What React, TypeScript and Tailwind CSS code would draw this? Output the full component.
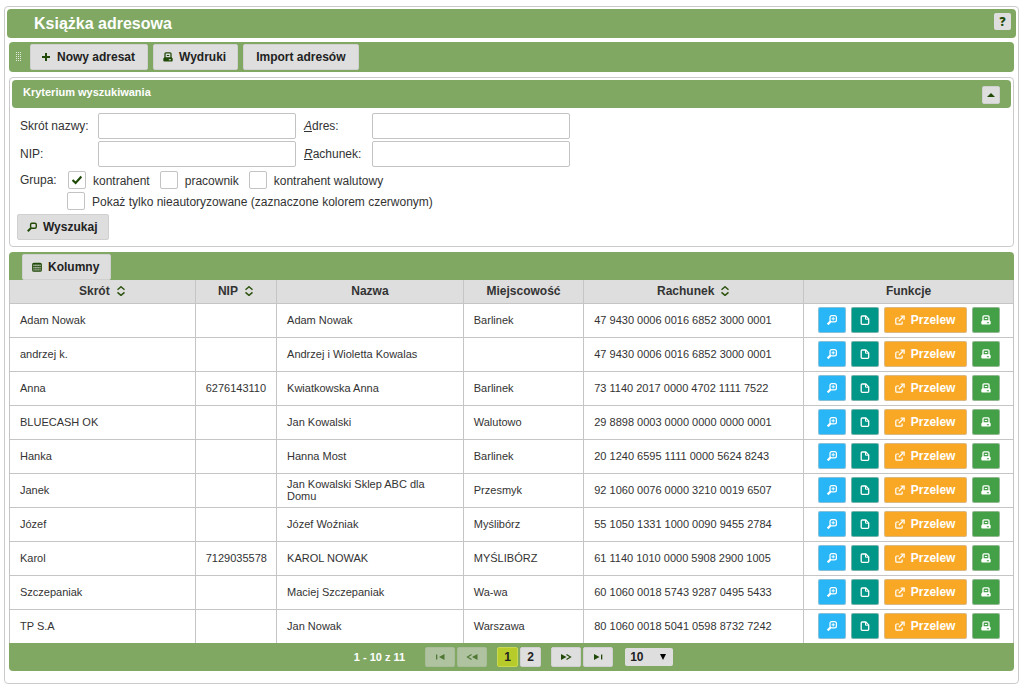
import type { ReactNode } from "react"
import { clsx } from "clsx"

type Row = {
  skrot: string
  nip?: string
  nazwa: string
  miasto?: string
  rachunek: string
}

const rows: Row[] = [
  { skrot: "Adam Nowak", nazwa: "Adam Nowak", miasto: "Barlinek", rachunek: "47 9430 0006 0016 6852 3000 0001" },
  { skrot: "andrzej k.", nazwa: "Andrzej i Wioletta Kowalas", rachunek: "47 9430 0006 0016 6852 3000 0001" },
  { skrot: "Anna", nip: "6276143110", nazwa: "Kwiatkowska Anna", miasto: "Barlinek", rachunek: "73 1140 2017 0000 4702 1111 7522" },
  { skrot: "BLUECASH OK", nazwa: "Jan Kowalski", miasto: "Walutowo", rachunek: "29 8898 0003 0000 0000 0000 0001" },
  { skrot: "Hanka", nazwa: "Hanna Most", miasto: "Barlinek", rachunek: "20 1240 6595 1111 0000 5624 8243" },
  { skrot: "Janek", nazwa: "Jan Kowalski Sklep ABC dla Domu", miasto: "Przesmyk", rachunek: "92 1060 0076 0000 3210 0019 6507" },
  { skrot: "Józef", nazwa: "Józef Woźniak", miasto: "Myślibórz", rachunek: "55 1050 1331 1000 0090 9455 2784" },
  { skrot: "Karol", nip: "7129035578", nazwa: "KAROL NOWAK", miasto: "MYŚLIBÓRZ", rachunek: "61 1140 1010 0000 5908 2900 1005" },
  { skrot: "Szczepaniak", nazwa: "Maciej Szczepaniak", miasto: "Wa-wa", rachunek: "60 1060 0018 5743 9287 0495 5433" },
  { skrot: "TP S.A", nazwa: "Jan Nowak", miasto: "Warszawa", rachunek: "80 1060 0018 5041 0598 8732 7242" },
]

const columns = [
  { label: "Skrót", width: "w-[18.5%]", sortable: true },
  { label: "NIP", width: "w-[8.1%]", sortable: true },
  { label: "Nazwa", width: "w-[18.6%]" },
  { label: "Miejscowość", width: "w-[12%]" },
  { label: "Rachunek", width: "w-[21.9%]", sortable: true },
  { label: "Funkcje", width: "w-[20.9%]" },
]

function Icon({ children, className }: { children: ReactNode; className?: string }) {
  return (
    <svg viewBox="0 0 10 10" className={clsx("size-[10px] shrink-0", className)} fill="none" stroke="currentColor" aria-hidden="true">
      {children}
    </svg>
  )
}

const PlusIcon = () => (
  <Icon>
    <path d="M5 1v8M1 5h8" strokeWidth="2" />
  </Icon>
)

const PrintIcon = () => (
  <Icon>
    <path d="M2 6V1.800q0-1 1-1h4q1 0 1 1V6" strokeWidth="1.3" />
    <path d="M3.800 3.500h2.400" />
    <path
      d="M1.500 5.200h7l1.200 1.300v2q0 1-1 1H1.300q-1 0-1-1v-2zM5.800 7.200v1.100h2.200V7.200z"
      fill="currentColor"
      fillRule="evenodd"
      stroke="none"
    />
  </Icon>
)

const SearchIcon = () => (
  <Icon>
    <path d="M4.800 1.200h3q1.500 0 1.500 1.500v2q0 1.500-1.500 1.500h-3q-1.200 0-1.200-1.500v-2q0-1.500 1.200-1.500z" strokeWidth="1.4" />
    <path d="M4 6 .8 9.200" strokeWidth="2" />
  </Icon>
)

const ZoomInIcon = () => (
  <Icon>
    <rect x="3" y=".7" width="6.400" height="6.200" rx="1.900" strokeWidth="1.2" />
    <path d="M6.200 2.200v3.200M4.600 3.800h3.200" />
    <path d="M3.400 6.600.6 9.400" strokeWidth="2.2" />
  </Icon>
)

const DocumentIcon = () => (
  <Icon>
    <path d="M2.200 1h3.600l2.900 2.900v4.400q0 1-1 1H2.200q-1 0-1-1V2q0-1 1-1z" strokeWidth="1.3" />
    <path d="M5.500 1v3.200h3.200" />
  </Icon>
)

const ExternalIcon = () => (
  <Icon>
    <path d="M4 3H1.700q-.9 0-.9.9v4.300q0 .9.9.9h4.600q.9 0 .9-.9V6.500" strokeWidth="1.2" />
    <path d="M3.800 6.200 8 2" strokeWidth="1.3" />
    <path d="M5.600 1.200h3.500v3.500" strokeWidth="1.3" />
  </Icon>
)

const GridIcon = () => (
  <Icon>
    <rect x=".8" y="1.3" width="8.4" height="7.9" rx="1" strokeWidth="1.3" />
    <path d="M.8 2.200h8.400M.8 4.500h8.400M.8 6.800h8.400M2.900 1.500v7.500M5 1.500v7.500M7.100 1.500v7.500" strokeWidth=".8" />
  </Icon>
)

const SortIcon = () => (
  <Icon className="text-[#2e5310]">
    <path d="M1.500 3.800 5 .8l3.500 3M1.500 6.400l3.500 3 3.500-3" strokeWidth="1.5" />
  </Icon>
)

function Button({ icon, className, children }: { icon?: ReactNode; className?: string; children: ReactNode }) {
  return (
    <button
      type="button"
      className={clsx("flex h-[26px] items-center rounded-xs border border-[#d0d0d0] bg-[#dedede] text-[12px] font-bold text-[#222]", className)}
    >
      {icon && <span className="mr-[6px] text-[#214a08]">{icon}</span>}
      {children}
    </button>
  )
}

function ActionButton({ label, color, icon, children }: { label: string; color: string; icon: ReactNode; children?: ReactNode }) {
  return (
    <button
      type="button"
      aria-label={label}
      className={clsx("flex h-[26px] items-center justify-center rounded-xs border border-[#c5c5c5]/60 text-[12px] font-bold text-white", color)}
    >
      {icon}
      {children}
    </button>
  )
}

function Checkbox({ id, label, checked }: { id: string; label: string; checked?: boolean }) {
  return (
    <div className="flex items-center gap-[7px]">
      <span className="grid size-[18px] place-items-center">
        <input
          id={id}
          type="checkbox"
          defaultChecked={checked}
          className="peer col-start-1 row-start-1 size-[18px] appearance-none rounded-xs border border-[#c3c3c3] bg-white"
        />
        <svg viewBox="0 0 10 10" className="pointer-events-none col-start-1 row-start-1 hidden size-[10px] peer-checked:block" fill="none" stroke="#1f4a08" aria-hidden="true">
          <path d="M.6 5 3.6 8 9.4 1.6" strokeWidth="2.2" />
        </svg>
      </span>
      <label htmlFor={id} className="pt-[2px]">{label}</label>
    </div>
  )
}

const fieldClass = "h-[26px] min-w-0 rounded-xs border border-[#c3c3c3] bg-white px-1"

function SearchPanel() {
  return (
    <section className="mt-[5px] rounded-sm border border-[#cbcbcb] p-[2px]">
      <header className="flex h-7 items-center justify-between rounded-sm bg-[#80a863] px-[11px] text-white">
        <h2 className="pb-[5px] text-[11px] font-bold">Kryterium wyszukiwania</h2>
        <button type="button" aria-label="Zwiń" className="mt-[2px] flex size-[18px] items-center justify-center rounded-xs border border-[#d0d0d0] bg-[#dedede] text-[#214a08]">
          <svg viewBox="0 0 8 4" className="h-1 w-2" fill="currentColor" aria-hidden="true">
            <path d="M4 0 8 4H0z" />
          </svg>
        </button>
      </header>

      <form className="px-[5px] pt-[5px] pb-1">
        <div className="grid grid-cols-[78px_198px_76px_198px] items-center gap-y-[2px] pl-[3px]">
          <label htmlFor="skrot">Skrót nazwy:</label>
          <input id="skrot" type="text" className={fieldClass} />
          <label htmlFor="adres" className="pl-2"><em className="underline">A</em>dres:</label>
          <input id="adres" type="text" className={fieldClass} />
          <label htmlFor="nip">NIP:</label>
          <input id="nip" type="text" className={fieldClass} />
          <label htmlFor="rachunek" className="pl-2"><em className="underline">R</em>achunek:</label>
          <input id="rachunek" type="text" className={fieldClass} />
        </div>

        <fieldset className="mt-1 flex items-center gap-[10px] pl-[3px]">
          <span className="w-[38px]">Grupa:</span>
          <Checkbox id="kontrahent" label="kontrahent" checked />
          <Checkbox id="pracownik" label="pracownik" />
          <Checkbox id="walutowy" label="kontrahent walutowy" />
        </fieldset>
        <div className="mt-[3px] pl-[50px]">
          <Checkbox id="nieautoryzowane" label="Pokaż tylko nieautoryzowane (zaznaczone kolorem czerwonym)" />
        </div>
        <Button icon={<SearchIcon />} className="mt-1 px-[9px]">
          <span className="pr-[2px]">Wyszukaj</span>
        </Button>
      </form>
    </section>
  )
}

function AddressTable() {
  return (
    <table className="w-full table-fixed border-collapse border-x border-[#c5c5c5] text-[11px]">
      <thead>
        <tr className="h-[23px] bg-[#dedede] text-[12px]">
          {columns.map((col) => (
            <th key={col.label} className={clsx("border border-t-0 border-[#c5c5c5] p-0 font-bold leading-4", col.width)}>
              <span className="inline-flex items-center gap-[6px] align-top">
                {col.label}
                {col.sortable && <SortIcon />}
              </span>
            </th>
          ))}
        </tr>
      </thead>
      <tbody className="[&_td]:border-x [&_td]:border-b [&_td]:border-[#c5c5c5] [&_td]:px-[10px] [&_td]:py-0 [&>tr:last-child>td]:border-b-0">
        {rows.map((row) => (
          <tr key={row.skrot} className="h-[34px] leading-3">
            <td>{row.skrot}</td>
            <td className="whitespace-nowrap">{row.nip}</td>
            <td>{row.nazwa}</td>
            <td>{row.miasto}</td>
            <td className="whitespace-nowrap">{row.rachunek}</td>
            <td>
              <div className="flex justify-center gap-[5px]">
                <ActionButton label="Podgląd" color="w-7 bg-[#29b6f6]" icon={<ZoomInIcon />} />
                <ActionButton label="Szczegóły" color="w-7 bg-[#009688]" icon={<DocumentIcon />} />
                <ActionButton label="Przelew" color="w-[83px] gap-[6px] bg-[#f9a825]" icon={<ExternalIcon />}>
                  Przelew
                </ActionButton>
                <ActionButton label="Drukuj" color="w-7 bg-[#43a047]" icon={<PrintIcon />} />
              </div>
            </td>
          </tr>
        ))}
      </tbody>
    </table>
  )
}

function PagerButton({ label, disabled, children }: { label: string; disabled?: boolean; children: ReactNode }) {
  return (
    <button
      type="button"
      aria-label={label}
      disabled={disabled}
      className="flex h-5 w-[30px] items-center justify-center rounded-xs border border-[#d0d0d0] bg-[#dedede] text-[#214a08] disabled:opacity-50"
    >
      <svg viewBox="0 0 12 8" className="h-2 w-3" fill="currentColor" stroke="none" aria-hidden="true">
        {children}
      </svg>
    </button>
  )
}

function Pager() {
  return (
    <div className="flex h-7 items-center justify-center gap-[10px] rounded-b-sm bg-[#80a863] pl-1 text-[12px] font-bold text-[#222]">
      <span className="mr-[10px] text-[11px] text-white">1 - 10 z 11</span>
      <div className="flex gap-[2px]">
        <PagerButton label="Pierwsza" disabled>
          <path d="M2 1.500h1.300v5H2zM10.500 1v6L5 4z" />
        </PagerButton>
        <PagerButton label="Poprzednia" disabled>
          <path d="M11.500 1v6L6 4z" />
          <path d="M5.500 1.500 1.500 4l4 2.500" fill="none" stroke="currentColor" strokeWidth="1.200" />
        </PagerButton>
      </div>
      <div className="flex gap-[2px]">
        <button type="button" className="h-5 w-[21px] rounded-xs border border-[#c8d84f] bg-[#b7cc2a]">1</button>
        <button type="button" className="h-5 w-[21px] rounded-xs border border-[#d0d0d0] bg-[#dedede]">2</button>
      </div>
      <div className="flex gap-[2px]">
        <PagerButton label="Następna">
          <path d="M1 1v6l5.500-3z" />
          <path d="M6.500 1.500l4 2.500-4 2.500" fill="none" stroke="currentColor" strokeWidth="1.200" />
        </PagerButton>
        <PagerButton label="Ostatnia">
          <path d="M2 1v6l5.500-3zM9 1.500h1.300v5H9z" />
        </PagerButton>
      </div>
      <div className="ml-[2px] grid items-center">
        <select aria-label="Liczba wierszy" className="col-start-1 row-start-1 h-[18px] w-12 appearance-none rounded-xs bg-[#dedede] pl-[5px]">
          <option>10</option>
        </select>
        <svg viewBox="0 0 6 6" className="pointer-events-none col-start-1 row-start-1 mr-[7px] size-[6px] justify-self-end" aria-hidden="true">
          <path d="M0 0h6L3 6z" />
        </svg>
      </div>
    </div>
  )
}

export default function App() {
  return (
    <div className="bg-white px-1 py-[6px] font-['Liberation_Sans',Arial,sans-serif] text-[12px] leading-4 text-[#333]">
      <main className="mr-[1px] rounded-sm border border-[#cbcbcb] p-[2px] pb-3">
        <header className="flex h-[29px] items-center justify-between rounded-sm bg-[#80a863] pr-[5px] pl-[27px]">
          <h1 className="text-[16px] font-bold text-white">Książka adresowa</h1>
          <button type="button" className="mb-1 size-[17px] rounded-xs bg-[#dedede] font-['Open_Sans',sans-serif] text-[12px] font-extrabold text-[#214a08]">
            ?
          </button>
        </header>

        <div className="px-[2px]">
          <div className="mt-1 flex h-[30px] items-center gap-[5px] rounded-sm bg-[#80a863] pl-[7px]">
            <svg viewBox="0 0 5 10" className="mr-1 h-[10px] w-[5px]" stroke="#e4eddd" strokeDasharray="1 1" aria-hidden="true">
              <path d="M.5 0v10M2.500 0v10M4.500 0v10" />
            </svg>
            <Button icon={<PlusIcon />} className="px-[10px]">
              <span className="pr-[2px]">Nowy adresat</span>
            </Button>
            <Button icon={<PrintIcon />} className="px-[9px]">
              <span className="pr-[2px]">Wydruki</span>
            </Button>
            <Button className="px-3">Import adresów</Button>
          </div>

          <SearchPanel />

          <section className="mt-[5px]">
            <div className="flex h-7 items-end rounded-t-sm bg-[#80a863] pl-[13px]">
              <Button icon={<GridIcon />} className="px-[9px]">
                <span className="pr-[2px]">Kolumny</span>
              </Button>
            </div>
            <AddressTable />
            <Pager />
          </section>
        </div>
      </main>
    </div>
  )
}
